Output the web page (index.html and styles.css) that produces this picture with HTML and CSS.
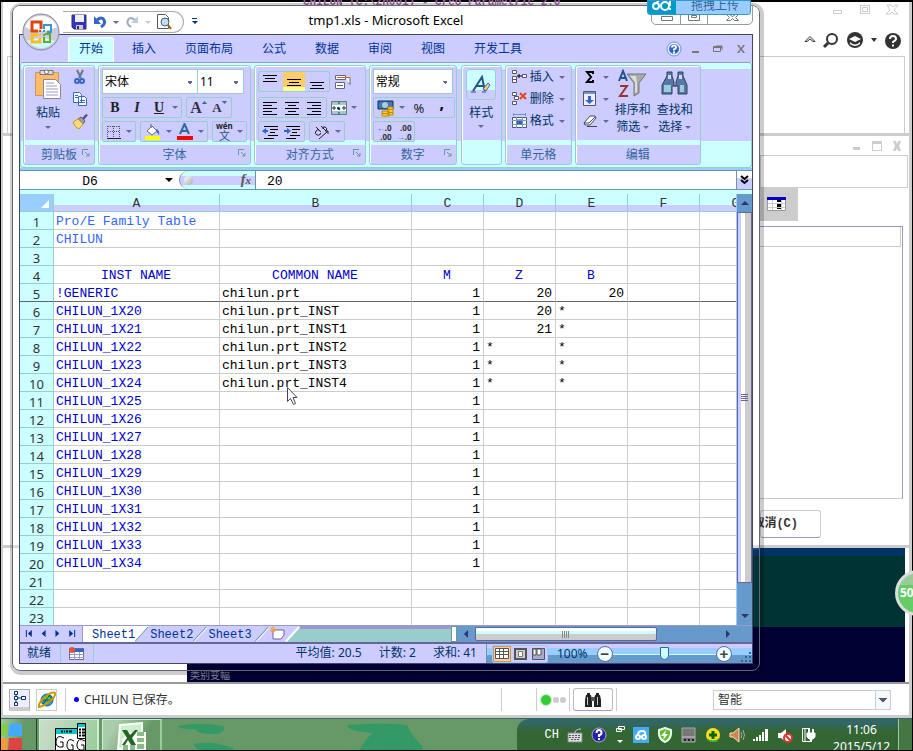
FILE: index.html
```html
<!DOCTYPE html>
<html lang="zh-CN">
<head>
<meta charset="utf-8">
<title>tmp1.xls - Microsoft Excel</title>
<link rel="stylesheet" href="styles.css">
</head>
<body>
<div class="desktop">
  <section class="cad">
    <header class="cad-head">
      <div class="cad-title">CHILUN (C:\Zh001) - Creo Parametric 2.0</div>
      <div class="cad-controls">
        <svg width="66" height="16" viewBox="0 0 66 16" fill="none" stroke="#ccc"><rect x=".5" y="8.500" width="8" height="3"/><rect x="27.500" y="3.500" width="9" height="8"/><rect x="29.500" y="5.500" width="5" height="4"/><path d="M54 3h4l2 2 2-2h3l-4 5 4 4h-4l-2-2-2 2h-4l4-4z"/></svg>
      </div>
      <div class="cad-tools">
        <svg width="98" height="20" viewBox="0 0 98 20"><path d="M1 10.500l5-5 5 5H9L6 8l-3 2.500z" fill="#fff" stroke="#333"/><circle cx="28" cy="8" r="5" fill="none" stroke="#333" stroke-width="2"/><path d="M24 12l-4 4" stroke="#333" stroke-width="3"/><circle cx="51" cy="9" r="8" fill="#333"/><path d="M45 8l6-3 6 3-6 3zM46 11q5 5 10 0v2q-5 4-10 0z" fill="#fff"/><path d="M67 7h6l-3 4z" fill="#333"/><circle cx="89" cy="10" r="8" fill="#333"/><path d="M86 8q0-3 3-3t3 3q0 1-3 3v1M89 13.500v2" stroke="#fff" stroke-width="2" fill="none"/></svg>
      </div>
      <div class="cad-ribbon"></div>
    </header>
    <div class="dialog">
      <div class="dialog-controls"><svg width="50" height="12" viewBox="0 0 50 12" fill="#ccc"><path d="M1 7h7v3H1zM20 1h10v10H20zM41 1h3l1 3 1-3h3l-2 5 2 5h-3l-1-3-1 3h-3l2-5z"/><path d="M21 4h8v6h-8z" fill="#fff"/></svg></div>
      <div class="dialog-menu"></div>
      <div class="dialog-tools"><svg width="20" height="16" viewBox="0 0 20 16"><path d="M.5 1.500h18v13H.5z" fill="#fff" stroke="#999"/><path d="M0 1h19v3H0z" fill="#00c"/><path d="M1 7.500h17M1 11.500h17M5.500 4v10M14.500 4v10" stroke="#ccc"/><path d="M10 4h4v2h-4zM10 8h4v3h-4zM10 12h4v1h-4z"/></svg></div>
      <div class="dialog-table"><div class="dialog-row"></div></div>
      <div class="dialog-actions"><button class="cancel">取消(C)</button></div>
    </div>
    <div class="viewport"><div class="view-top"></div><div class="view-low">类别变幅</div></div>
    <footer class="cad-status">
      <button class="sq on"><svg width="14" height="16" viewBox="0 0 14 16" fill="#fff" stroke="#036"><path d="M3 4v9M3 8h7" /><path d="M1.500 1.500h3v3h-3zM1.500 6.500h3v3h-3zM1.500 12.500h3v3h-3zM8.500 6.500h4v3h-4z"/></svg></button>
      <button class="sq"><svg width="18" height="18" viewBox="0 0 18 18"><circle cx="9" cy="9" r="6" fill="#39c" stroke="#069"/><path d="M4 9h10l-3-5-4 1zM5 13l6-8" fill="#6c6" stroke="#063"/><path d="M1 16Q0 12 7 6t10-4q1 3-5 8T1 16z" fill="none" stroke="#c90" stroke-width="2"/></svg></button>
      <i class="rule"></i>
      <span class="message"><i class="bullet"></i>CHILUN 已保存。</span>
      <i class="rule wide"></i><i class="rule"></i>
      <span class="lights"><i class="go"></i><i></i><i></i></span>
      <i class="rule"></i>
      <button class="find"><svg width="18" height="16" viewBox="0 0 18 16"><path d="M3 1h3v2h1l1 5v7H1V8l1-5h1zM12 1h3v2h1l1 5v7h-7V8l1-5h1z" fill="#222"/><path d="M7 5h4v4H7z" fill="#555"/><path d="M3.500 5v8M13.500 5v8" stroke="#ccc"/></svg></button>
      <i class="rule"></i>
      <select class="filter" aria-label="选择过滤器"><option>智能</option></select>
    </footer>
  </section>

  <main class="excel">
    <header class="titlebar">
      <div class="qat">
        <svg width="16" height="16" viewBox="0 0 16 16"><path d="M1 1h14v14H3l-2-2z" fill="#33c" stroke="#336"/><path d="M4 1h9v7H4z" fill="#eef"/><path d="M5 11h7v4H5z" fill="#ccd"/><path d="M6 12h2v3H6z" fill="#336"/></svg>
        <svg width="16" height="16" viewBox="0 0 16 16"><path d="M5 6q5-4 7 0t-3 7" fill="none" stroke="#36c" stroke-width="3"/><path d="M2 2v8h7z" fill="#36c"/></svg><i class="caret"></i>
        <svg width="16" height="16" viewBox="0 0 16 16"><path d="M11 6q-5-4-7 0t3 7" fill="none" stroke="#9ab" stroke-width="2"/><path d="M14 2v7H7z" fill="#bcd"/></svg><i class="caret pale"></i>
        <svg width="16" height="16" viewBox="0 0 16 16"><path d="M1.500.500h8l3 3v11h-11z" fill="#fff" stroke="#556"/><circle cx="9" cy="8" r="4" fill="#bdf" stroke="#556"/><path d="M12 11l3 4" stroke="#960" stroke-width="2"/></svg>
      </div>
      <i class="more"></i>
      <h1>tmp1.xls - Microsoft Excel</h1>
      <div class="win-controls"><svg width="100" height="18" viewBox="0 0 100 18" fill="#fff" stroke="#777"><path d="M28.500 0v18M55.500 0v18" stroke="#999"/><path d="M9.500 10.500h11v4h-11zM36.500 7.500h11v7h-11zM39.500 9.500h5v2h-5zM74.500 14.500l3-3-3-3h3l3 2 3-2h3l-3 3 3 3h-4l-2-2-2 2z"/></svg></div>
      <div class="upload"><svg width="28" height="14" viewBox="0 0 28 14" fill="none" stroke="#fff" stroke-width="2"><path d="M11 0L5 4"/><circle cx="8" cy="5" r="3"/><circle cx="17" cy="5" r="4"/><path d="M22 0v5M22 7v2"/></svg><span>拖拽上传</span></div>
    </header>
    <svg class="orb" width="38" height="38" viewBox="0 0 38 38"><circle cx="19" cy="19" r="18" fill="#ccd" stroke="#889"/><path d="M3 14a17 17 0 0 1 32 0q-16 8-32 0z" fill="#fff"/><path d="M5 28q14-6 28 0-14 14-28 0z" fill="#cff"/><g fill="none" stroke-width="2"><path d="M16 18h-6v-9h9v7" stroke="#d41" stroke-width="3"/><path d="M22 16v-4h7v7h-4" stroke="#39d"/><path d="M16 22h-6v7h8v-4" stroke="#fb2" stroke-width="3"/><path d="M23 21h5v8h-6v-5" stroke="#6a3"/></g><path d="M17 17h2v2h-2z" fill="#d41"/><path d="M21 17h2v2h-2z" fill="#39d"/><path d="M17 21h2v2h-2z" fill="#fb2"/><path d="M21 21h2v2h-2z" fill="#6a3"/></svg>

    <div class="client">
      <nav class="tabs">
        <a class="active" href="#">开始</a><a href="#">插入</a><a href="#">页面布局</a><a href="#">公式</a><a href="#">数据</a><a href="#">审阅</a><a href="#">视图</a><a href="#">开发工具</a>
        <svg class="doc-controls" width="82" height="16" viewBox="0 0 82 16"><circle cx="8" cy="8" r="6" fill="#36c" stroke="#eef" stroke-width="2"/><circle cx="8" cy="8" r="7" fill="none" stroke="#69c"/><path d="M6 6.500q0-2 2-2t2 2q0 1-2 2v1M8 10.500v2" stroke="#fff" fill="none" stroke-width="2"/><path d="M26 10h7v2h-7zM47 5h9v2h-9zM71 4h2l2 3 2-3h2l-3 4 3 4h-2l-2-3-2 3h-2l3-4z" fill="#777"/><path d="M47.500 6.500h7v4h-7zM50 5h6v4" fill="none" stroke="#777"/></svg>
      </nav>

      <div class="ribbon">
        <section class="group">
          <div class="body clip">
            <button class="big"><svg width="28" height="30" viewBox="0 0 28 30"><path d="M1.500 3.500h23v23h-23z" fill="#fb6" stroke="#c96"/><path d="M6 1.500h13v4H6z" fill="#ddd" stroke="#777"/><circle cx="12.500" cy="3" r="2" fill="#fff" stroke="#777"/><path d="M9.500 10.500h12l5 5v14h-17z" fill="#fff" stroke="#889"/><path d="M12 14h8M12 17h11M12 20h12M12 23h12M12 26h12" stroke="#99c"/></svg><span>粘贴</span><i class="caret"></i></button>
            <div class="stack">
              <button><svg width="16" height="16" viewBox="0 0 16 16" fill="none"><path d="M5 1l4 8M11 1L7 9" stroke="#678" stroke-width="2"/><circle cx="5" cy="12" r="2" stroke="#36c" stroke-width="2"/><circle cx="10" cy="12" r="2" stroke="#36c" stroke-width="2"/></svg></button>
              <button><svg width="16" height="16" viewBox="0 0 16 16" fill="#fff" stroke="#36c"><path d="M1.500 1.500h6l2 2v8h-8zM6.500 5.500h6l2 2v7h-8z"/><path d="M3 4.500h3M3 6.500h3M8 9.500h5M8 11.500h5"/></svg></button>
              <button><svg width="16" height="16" viewBox="0 0 16 16"><path d="M10 5l4-4 2 1-4 5z" fill="#558"/><path d="M6 6l3-2 4 4-2 3z" fill="#99a" stroke="#667"/><path d="M1 9l5-3 5 5-4 5q-4-1-6-7z" fill="#ffd97a" stroke="#b93"/></svg></button>
            </div>
          </div>
          <h2>剪贴板<svg class="launch" width="8" height="8" viewBox="0 0 8 8"><path d="M.5 6V.5H6M3 3l4 4M7 4v3H4" fill="none" stroke="#699"/></svg></h2>
        </section>

        <section class="group">
          <div class="body rows">
            <div class="line"><select class="box font" aria-label="字体"><option>宋体</option></select><select class="box size" aria-label="字号"><option>11</option></select></div>
            <div class="line">
              <div class="seg"><button class="b">B</button><button class="i">I</button><button class="u">U</button><i class="caret"></i></div>
              <div class="seg"><button class="grow">A<svg width="5" height="14" viewBox="0 0 5 14"><path d="M0 3l2.500-3L5 3z" fill="#369"/></svg></button><button class="shrink">A<svg width="5" height="14" viewBox="0 0 5 14"><path d="M0 0h5L2.500 3z" fill="#369"/></svg></button></div>
            </div>
            <div class="line full">
              <div class="seg"><button><svg width="16" height="14" viewBox="0 0 16 14" fill="none" stroke="#556"><path d="M1.500 1v12M7.500 1v12M13.500 1v12M2 1.500h12M2 6.500h12" stroke-dasharray="1 1"/><path d="M1 13.500h14" stroke="#223"/></svg></button><i class="caret"></i></div>
              <div class="seg"><button><svg width="18" height="18" viewBox="0 0 18 18"><path d="M3 8l5-5 5 5-5 4z" fill="#fff" stroke="#667"/><path d="M7 5V1" stroke="#667"/><path d="M12 6q4 1 3 6l-3-4z" fill="#36c"/><path d="M1 13h15v4H1z" fill="#ff0"/></svg></button><i class="caret"></i><button><svg width="18" height="18" viewBox="0 0 18 18"><path d="M4 11L8.500 1 13 11M6 8h6" fill="none" stroke="#369" stroke-width="2"/><path d="M1 13h16v4H1z" fill="red"/></svg></button><i class="caret"></i></div>
              <div class="seg"><button class="wen"><small>wén</small><span>文</span></button><i class="caret"></i></div>
            </div>
          </div>
          <h2>字体<svg class="launch" width="8" height="8" viewBox="0 0 8 8"><path d="M.5 6V.5H6M3 3l4 4M7 4v3H4" fill="none" stroke="#699"/></svg></h2>
        </section>

        <section class="group align">
          <div class="body rows">
            <div class="line"><div class="seg"><button class="al"><svg width="14" height="16" viewBox="0 0 14 16" stroke="#000"><path d="M0 1.500h14M2 4.500h10M0 7.500h14"/></svg></button><button class="al on"><svg width="14" height="16" viewBox="0 0 14 16" stroke="#000"><path d="M0 5.500h14M2 8.500h10M0 11.500h14"/></svg></button><button class="al"><svg width="14" height="16" viewBox="0 0 14 16" stroke="#000"><path d="M0 8.500h14M2 11.500h10M0 14.500h14"/></svg></button></div>
              <button><svg width="18" height="18" viewBox="0 0 18 18" fill="#fff" stroke="#667"><path d="M1.500 2.500h10v4h-10zM1.500 9.500h9v6h-9z"/><path d="M3 12.500h6M12 4.500h4v7l-2-2" stroke="#666"/><path d="M3 4.500h13" stroke="#c63"/></svg></button></div>
            <div class="line"><div class="seg"><button class="al"><svg width="14" height="14" viewBox="0 0 14 14" stroke="#000"><path d="M0 1.500h14M0 4.500h9M0 7.500h14M0 10.500h9M0 13.500h14"/></svg></button><button class="al"><svg width="14" height="14" viewBox="0 0 14 14" stroke="#000"><path d="M0 1.500h14M3 4.500h8M0 7.500h14M3 10.500h8M0 13.500h14"/></svg></button><button class="al"><svg width="14" height="14" viewBox="0 0 14 14" stroke="#000"><path d="M0 1.500h14M5 4.500h9M0 7.500h14M5 10.500h9M0 13.500h14"/></svg></button></div>
              <button><svg width="16" height="14" viewBox="0 0 16 14"><path d="M.5.500h15v13H.5z" fill="#9cc" stroke="#677"/><path d="M1 4h14v6H1z" fill="#fff"/><path d="M1 7h4M3 5v4M11 7h4M13 5v4M8 1v2M8 11v2" stroke="#333"/><path d="M6 8q0-3 2-2t1 3q-2 0-3-1z" fill="#036"/></svg></button><i class="caret"></i></div>
            <div class="line"><div class="seg"><button class="al"><svg width="16" height="14" viewBox="0 0 16 14" stroke="#000"><path d="M2 1.500h14M8 4.500h8M8 7.500h5M6 10.500h10M2 13.500h10"/><path d="M6 6H1" stroke="#36c" stroke-width="2"/><path d="M4 3L0 6l4 3z" fill="#36c" stroke="none"/></svg></button><button class="al"><svg width="16" height="14" viewBox="0 0 16 14" stroke="#000"><path d="M2 1.500h14M8 4.500h8M8 7.500h5M6 10.500h10M2 13.500h10"/><path d="M0 6h4" stroke="#36c" stroke-width="2"/><path d="M3 3l4 3-4 3z" fill="#36c" stroke="none"/></svg></button></div>
              <div class="seg"><button><svg width="18" height="16" viewBox="0 0 18 16" fill="none" stroke="#222"><path d="M3 3l5 5M7 7q-2-3-4 0t1 4 4-2M8 2l5 5q2-3-1-4t-2 2M6 15l9-8M15 10V7h-3"/></svg></button><i class="caret"></i></div></div>
          </div>
          <h2>对齐方式<svg class="launch" width="8" height="8" viewBox="0 0 8 8"><path d="M.5 6V.5H6M3 3l4 4M7 4v3H4" fill="none" stroke="#699"/></svg></h2>
        </section>

        <section class="group number">
          <div class="body rows">
            <div class="line"><select class="box num" aria-label="数字格式"><option>常规</option></select></div>
            <div class="line"><div class="seg"><button><svg width="18" height="18" viewBox="0 0 18 18"><path d="M1 2h15v8H1z" fill="#47a" stroke="#036"/><circle cx="8" cy="6" r="3" fill="#acd"/><path d="M11 8h5v8h-5zM5 12h7v5H5z" fill="#fc3" stroke="#b80"/><path d="M11 10.500h5M11 13.500h5M5 14.500h6" stroke="#b80"/></svg></button><i class="caret"></i><button class="pct">%</button><button class="comma">,</button></div></div>
            <div class="line"><div class="seg dec"><button><span><b>←</b>.0</span><span>.00</span></button><button><span>.00</span><span><b>→</b>.0</span></button></div></div>
          </div>
          <h2>数字<svg class="launch" width="8" height="8" viewBox="0 0 8 8"><path d="M.5 6V.5H6M3 3l4 4M7 4v3H4" fill="none" stroke="#699"/></svg></h2>
        </section>

        <section class="group styles">
          <button class="big"><span class="tile"><svg width="22" height="20" viewBox="0 0 22 20"><path d="M3 16L12 2l3 14M7 11h7" fill="none" stroke="#258" stroke-width="2"/><path d="M1 17h5M12 17h4" stroke="#258"/><path d="M13 14l5-6 2 2-4 6z" fill="#fc6" stroke="#36c"/></svg></span><span>样式</span><i class="caret"></i></button>
        </section>

        <section class="group">
          <div class="body cells">
            <button><svg width="18" height="16" viewBox="0 0 18 16" fill="#fff" stroke="#556"><path d="M1.500 1.500h4v3h-4zM1.500 7.500h4v3h-4zM1.500 10.500h4v3h-4zM11.500 5.500h4v3h-4z"/><path d="M6 7h5M8 5v4" stroke="#000"/></svg>插入<i class="caret"></i></button>
            <button><svg width="18" height="16" viewBox="0 0 18 16" fill="#fff" stroke="#556"><path d="M1.500 1.500h4v3h-4zM1.500 10.500h4v3h-4zM3.500 5.500h4v3h-4z"/><path d="M9 2l6 6M15 2L9 8" stroke="#e42" stroke-width="2"/></svg>删除<i class="caret"></i></button>
            <button><svg width="18" height="16" viewBox="0 0 18 16" fill="#fff" stroke="#556"><path d="M1.500 4.500h14v10h-14z"/><path d="M6 7h5v4H6z" fill="#36c"/><path d="M1 7.500h15M1 11.500h15M5.500 4v11M11.500 4v11M2 1.500h13M2.500 0v3M14.500 0v3" stroke="#69c"/></svg>格式<i class="caret"></i></button>
          </div>
          <h2>单元格</h2>
        </section>

        <section class="group">
          <div class="body edit">
            <div class="stack">
              <button><svg width="14" height="16" viewBox="0 0 14 16"><path d="M10 5V3H4l4 5-4 5h6v-2" fill="none" stroke="#000" stroke-width="2"/></svg><i class="caret"></i></button>
              <button><svg width="14" height="16" viewBox="0 0 14 16"><path d="M.5.500h12v14H.5z" fill="#eef" stroke="#556"/><path d="M1 1h11v2H1z" fill="#69c"/><path d="M5 5h3v4h3l-4.500 4L2 9h3z" fill="#36c"/></svg><i class="caret"></i></button>
              <button><svg width="14" height="16" viewBox="0 0 14 16"><path d="M1 10l6-7h5l1 2-6 7H2z" fill="#fff" stroke="#445"/><path d="M1 10h5l6-6M4 13.500h10" fill="none" stroke="#445"/></svg><i class="caret"></i></button>
            </div>
            <button class="big"><svg width="32" height="30" viewBox="0 0 32 30"><path d="M2 12L6 2l4 10M4 9h5" fill="none" stroke="#258" stroke-width="2"/><path d="M3 17h7L3 27h8" fill="none" stroke="#933" stroke-width="2"/><path d="M10 5h19l-7 9v10l-5 3V14z" fill="#aaa" stroke="#777"/><path d="M13 7h6l1 7v9l-2 1V13z" fill="#ddd"/></svg><span>排序和<br>筛选 <i class="caret"></i></span></button>
            <button class="big"><svg width="30" height="30" viewBox="0 0 30 30"><path d="M7 3h5v4l2 6v4h2v-4l2-6V3h5v4l4 9v9h-9v-8h-6v8H2v-9l5-9z" fill="#57a" stroke="#345"/><path d="M4 16h7v7H4zM20 16h4v7h-4z" fill="#9cd"/><path d="M8 6h3v4H8zM19 6h3v4h-3z" fill="#cde"/></svg><span>查找和<br>选择 <i class="caret"></i></span></button>
          </div>
          <h2>编辑</h2>
        </section>
      </div>

      <div class="formula">
        <input class="name" value="D6" aria-label="名称框"><i class="down"></i>
        <button class="fx"><i class="knob"></i><em>f<small>x</small></em></button>
        <input class="value" value="20" aria-label="编辑栏">
        <button class="expand"><svg width="9" height="10" viewBox="0 0 9 10" fill="none" stroke="#000" stroke-width="2"><path d="M1 1l3.500 3L8 1M1 5l3.500 3L8 5"/></svg></button>
      </div>

      <div class="work">
        <div class="sheet">
          <table>
            <colgroup><col class="c0"><col class="ca"><col class="cb"><col><col><col><col><col></colgroup>
            <thead><tr><th class="corner"><svg width="8" height="8" viewBox="0 0 8 8"><path d="M8 0v8H0z" fill="#fff"/></svg></th><th>A</th><th>B</th><th>C</th><th>D</th><th>E</th><th>F</th><th>G</th></tr></thead>
            <tbody>
              <tr><th>1</th><td class="title">Pro/E Family Table</td><td></td><td></td><td></td><td></td><td></td><td></td></tr>
              <tr><th>2</th><td class="title">CHILUN</td><td></td><td></td><td></td><td></td><td></td><td></td></tr>
              <tr><th>3</th><td></td><td></td><td></td><td></td><td></td><td></td><td></td></tr>
              <tr class="names"><th>4</th><td>INST NAME</td><td>COMMON NAME</td><td>M</td><td>Z</td><td>B</td><td></td><td></td></tr>
              <tr class="frozen"><th>5</th><td>!GENERIC</td><td>chilun.prt</td><td class="n">1</td><td class="n">20</td><td class="n">20</td><td></td><td></td></tr>
              <tr><th>6</th><td>CHILUN_1X20</td><td>chilun.prt_INST</td><td class="n">1</td><td class="n">20</td><td>*</td><td></td><td></td></tr>
              <tr><th>7</th><td>CHILUN_1X21</td><td>chilun.prt_INST1</td><td class="n">1</td><td class="n">21</td><td>*</td><td></td><td></td></tr>
              <tr><th>8</th><td>CHILUN_1X22</td><td>chilun.prt_INST2</td><td class="n">1</td><td>*</td><td>*</td><td></td><td></td></tr>
              <tr><th>9</th><td>CHILUN_1X23</td><td>chilun.prt_INST3</td><td class="n">1</td><td>*</td><td>*</td><td></td><td></td></tr>
              <tr><th>10</th><td>CHILUN_1X24</td><td>chilun.prt_INST4</td><td class="n">1</td><td>*</td><td>*</td><td></td><td></td></tr>
              <tr><th>11</th><td>CHILUN_1X25</td><td></td><td class="n">1</td><td></td><td></td><td></td><td></td></tr>
              <tr><th>12</th><td>CHILUN_1X26</td><td></td><td class="n">1</td><td></td><td></td><td></td><td></td></tr>
              <tr><th>13</th><td>CHILUN_1X27</td><td></td><td class="n">1</td><td></td><td></td><td></td><td></td></tr>
              <tr><th>14</th><td>CHILUN_1X28</td><td></td><td class="n">1</td><td></td><td></td><td></td><td></td></tr>
              <tr><th>15</th><td>CHILUN_1X29</td><td></td><td class="n">1</td><td></td><td></td><td></td><td></td></tr>
              <tr><th>16</th><td>CHILUN_1X30</td><td></td><td class="n">1</td><td></td><td></td><td></td><td></td></tr>
              <tr><th>17</th><td>CHILUN_1X31</td><td></td><td class="n">1</td><td></td><td></td><td></td><td></td></tr>
              <tr><th>18</th><td>CHILUN_1X32</td><td></td><td class="n">1</td><td></td><td></td><td></td><td></td></tr>
              <tr><th>19</th><td>CHILUN_1X33</td><td></td><td class="n">1</td><td></td><td></td><td></td><td></td></tr>
              <tr><th>20</th><td>CHILUN_1X34</td><td></td><td class="n">1</td><td></td><td></td><td></td><td></td></tr>
              <tr><th>21</th><td></td><td></td><td></td><td></td><td></td><td></td><td></td></tr>
              <tr><th>22</th><td></td><td></td><td></td><td></td><td></td><td></td><td></td></tr>
              <tr><th>23</th><td></td><td></td><td></td><td></td><td></td><td></td><td></td></tr>
            </tbody>
          </table>
        </div>
        <div class="vbar"><i class="up"></i><div class="vthumb"><i></i></div><i class="dn"></i></div>
      </div>

      <div class="sheetbar">
        <svg class="nav" width="63" height="16" viewBox="0 0 63 16" fill="#039"><path d="M6 4h1v7H6zM12 4v7L8 7.500zM26 4v7l-4-3.500zM36 4v7l4-3.500zM50 4v7l4-3.500zM55 4h1v7h-1z"/></svg>
        <a class="first" href="#">Sheet1</a>
        <svg width="15" height="16" viewBox="0 0 15 16"><path d="M0 0h14L0 15z" fill="#fff"/><path d="M0 15.500L13 1" stroke="#699"/></svg>
        <a href="#">Sheet2</a>
        <svg width="15" height="16" viewBox="0 0 15 16"><path d="M0 15.500L13 1" stroke="#699"/><path d="M1 16L14 2" stroke="#fff"/></svg>
        <a href="#">Sheet3</a>
        <svg width="18" height="16" viewBox="0 0 18 16"><path d="M3 15.500L16 1" stroke="#699"/><path d="M4 16L17 2" stroke="#fff"/></svg>
        <svg width="30" height="16" viewBox="0 0 30 16"><path d="M30 0v16H16L30 1z" fill="#9cc"/><path d="M16 15.500L29 1" stroke="#fff" stroke-width="2"/><path d="M3 4h11v5l-3 4H3z" fill="#fff" stroke="#669"/><path d="M3 0v7M0 4h7M1 2l4 4M5 2L1 6" stroke="#f93"/></svg>
        <div class="gap"></div><i class="split"></i>
        <div class="hbar"><i class="lt"></i><div class="hthumb"><i></i></div><i class="rt"></i></div>
      </div>

      <footer class="status">
        <span class="ready">就绪</span>
        <span class="macro"><svg width="16" height="14" viewBox="0 0 16 14"><path d="M.5 1.500h14v11H.5z" fill="#fff" stroke="#669"/><path d="M1 2h14v3H1z" fill="#36c"/><path d="M1 7.500h14M1 10.500h14M5.500 5v8M10.500 5v8" stroke="#99c"/><circle cx="3" cy="3" r="3" fill="#d53"/></svg></span>
        <span class="stats"><span>平均值: 20.5</span><span>计数: 2</span><span>求和: 41</span></span>
        <div class="zoom">
          <div class="views">
            <button class="on"><svg width="14" height="11" viewBox="0 0 14 11"><path d="M.5.500h13v10H.5zM1 3.500h13M1 6.500h13M4.500 1v9M8.500 1v9" fill="#fff" stroke="#555"/></svg></button>
            <button><svg width="13" height="12" viewBox="0 0 13 12"><path d="M1 1h11v10H1z" fill="#ccc" stroke="#555" stroke-width="2"/><path d="M4.500 3.500h4v5h-4z" fill="#fff" stroke="#777"/></svg></button>
            <button><svg width="13" height="12" viewBox="0 0 13 12"><path d="M.5.500h12v11H.5z" fill="#aac" stroke="#555"/><path d="M1 1h3v6H1zM5 1h4v6H5z" fill="#fff" stroke="#555"/></svg></button>
          </div>
          <span class="percent">100%</span>
          <button class="round">−</button>
          <input type="range" min="0" max="100" value="50" aria-label="缩放">
          <button class="round">+</button>
          <svg class="grip" width="12" height="12" viewBox="0 0 12 12" fill="#369"><path d="M9 1h2v2H9zM5 5h2v2H5zM9 5h2v2H9zM1 9h2v2H1zM5 9h2v2H5zM9 9h2v2H9z"/></svg>
        </div>
      </footer>
    </div>
  </main>

  <div class="counter">50</div>
  <svg class="pointer" width="14" height="20" viewBox="0 0 14 20"><path d="M1.500 1.500v14l3-3 3 6 2-1-2.500-6h4z" fill="#fff" stroke="#446"/></svg>

  <footer class="taskbar">
    <button class="start"><svg width="22" height="30" viewBox="0 0 22 30"><path d="M0 4h6v12H0z" fill="#8c4"/><path d="M8 5q8-4 13 0v11H7z" fill="#4af"/><path d="M0 18h6v12H0z" fill="#f93"/><path d="M8 18h13v12H7z" fill="#d44"/></svg></button>
    <button class="task"><svg width="34" height="28" viewBox="0 0 34 28"><path d="M3.500 6.500h30v22h-30z" fill="#fff" stroke="#000"/><path d="M4 7h21v5H4z" fill="#0cc"/><path d="M25.500 1.500h8v15h-8z" fill="#fff" stroke="#000"/><path d="M26 2h7v3h-7z" fill="#0cc"/><path d="M27 7.500h2M30 7.500h3M27 10.500h2M30 10.500h3M27 13.500h2M30 13.500h3M9 9.500h2M12 9.500h1M14 9.500h2M17 9.500h3" stroke="#000" stroke-width="2"/><path d="M12 16q-7-4-8 3t7 6v-5h-3M22 19q-6-4-7 3t6 6v-5h-2M33 19q-7-4-8 3t7 6v-5h-3" fill="none" stroke="#000"/></svg></button>
    <button class="task xl"><svg width="30" height="28" viewBox="0 0 30 28"><path d="M3 3l22-2v20L1 28z" fill="#cec" stroke="#fff" stroke-width="2"/><path d="M12 10h17v18H5V18z" fill="#fff"/><path d="M5 8h5l3 5 5-5h3l-6 8 4 7h-5l-3-5-3 5H5l5-7z" fill="#262"/><path d="M20 10h7v4h-7zM20 16h7v4h-7zM20 22h7v5h-7zM13 23h5v5h-5zM6 23h5v5H6z" fill="#8b8"/></svg></button>
    <svg class="wallpaper" width="260" height="32" viewBox="0 0 260 32" fill="#396"><path d="M14 7q22-4 46 0 4 5-6 8-24 0-20-5-14 1-20-3zM30 25q20-4 40 4v3H36zM184 6q34-3 60 0 4 10 16 22v4h-64q6-12 14-18-26-2-26-8z"/></svg>
    <div class="tray">
      <span class="lang">CH</span>
      <svg width="16" height="16" viewBox="0 0 16 16"><path d="M1 6h14v9H1z" fill="#ddd" stroke="#888"/><path d="M2 8.500h12M2 10.500h12M4 12.500h8" stroke="#555" stroke-dasharray="2 1"/><path d="M8 6q0-4 6-4" fill="none" stroke="#ccc"/></svg>
      <svg width="16" height="16" viewBox="0 0 16 16"><circle cx="8" cy="8" r="7" fill="#22a" stroke="#aac"/><path d="M5.500 6q0-3 2.500-3t2.500 2.500T8 8v2M8 11v2" fill="none" stroke="#fff" stroke-width="2"/></svg>
      <svg width="10" height="20" viewBox="0 0 10 20"><path d="M3.500 1.500h6v3h-6zM1.500 3.500h5v3h-5z" fill="#363" stroke="#fff"/><path d="M2 15h6l-3 3z" fill="#fff"/></svg>
      <svg width="16" height="16" viewBox="0 0 16 16"><path d="M0 0h16v16H0z" fill="#4af"/><path d="M5 8q0-4 4-4t3 4" fill="none" stroke="#fff" stroke-width="2"/><circle cx="5" cy="10" r="2" fill="none" stroke="#fff" stroke-width="2"/><circle cx="11" cy="10" r="2" fill="none" stroke="#fff" stroke-width="2"/></svg>
      <svg width="16" height="16" viewBox="0 0 16 16"><path d="M8 1l6 2q1 9-6 12Q1 12 2 3z" fill="#6b3" stroke="#efe" stroke-width="2"/><path d="M9 3L4 9h3l-1 4 5-6H8z" fill="#fff"/></svg>
      <svg width="16" height="16" viewBox="0 0 16 16"><path d="M1 1h13v14H1z" fill="#777" stroke="#aaa"/><path d="M1 10h13" stroke="#ccc"/><path d="M3 12h2v2H3zM7 12h2v2H7zM11 12h2v2h-2z" fill="#222"/></svg>
      <svg width="16" height="16" viewBox="0 0 16 16"><circle cx="8" cy="8" r="7" fill="#fd2"/><path d="M2 11q6 5 12 0l-2 4H5z" fill="#3a3"/><path d="M8 4v8M4 8h8" stroke="#060" stroke-width="3"/></svg>
      <svg width="16" height="16" viewBox="0 0 16 16"><path d="M1 6h3l6-5v14l-6-5H1z" fill="#c85" stroke="#fdb"/><path d="M12 5q2 3 0 6M14 3q3 5 0 10" fill="none" stroke="#aaa"/></svg>
      <svg width="16" height="16" viewBox="0 0 16 16" fill="#fff"><path d="M0 12h2v2H0zM3 10h2v4H3zM6 8h2v6H6zM9 5h2v9H9zM12 2h3v12h-3z"/></svg>
      <svg width="16" height="16" viewBox="0 0 16 16"><path d="M1 6h3l5-4v13l-5-4H1z" fill="#fff"/><circle cx="11" cy="11" r="4" fill="#fff" stroke="#d33" stroke-width="2"/><path d="M8 8l6 6" stroke="#d33" stroke-width="2"/></svg>
      <svg width="16" height="16" viewBox="0 0 16 16" fill="none" stroke="#fff"><path d="M9 1.500H1.500v13H9M4 1v13" /><path d="M6 6h8v4l-2 2H8l-2-2z" fill="#fff"/><path d="M8 2v4M12 2v4M10 12v3" stroke-width="2"/></svg>
      <time><span>11:06</span><span>2015/5/12</span></time>
      <button class="show" aria-label="显示桌面"></button>
    </div>
  </footer>
</div>
</body>
</html>
```
FILE: styles.css
```css
* { box-sizing: border-box; }
body {
  margin: 0;
  background: #000;
  font: 12px/16px "Noto Sans", "Noto Sans CJK SC", sans-serif;
  color: #036;
}
button { border: 0; padding: 0; margin: 0; background: none; color: inherit; font: inherit; display: flex; align-items: center; justify-content: center; }
svg { display: block; flex: none; }
a { color: inherit; text-decoration: none; }
h1, h2 { margin: 0; font-weight: normal; font-size: 12px; }
i { font-style: normal; flex: none; }
select { appearance: none; border-radius: 0; font: inherit; }

.desktop { position: relative; height: 100vh; overflow: hidden; display: flex; flex-direction: column; padding: 2px 1px 1px; }

/* CAD program behind the spreadsheet */
.cad { flex: 1; display: flex; flex-direction: column; background: #fff; border: solid #ccc; border-width: 0 3px 3px 2px; min-height: 0; }
.cad-head { height: 134px; border-bottom: 3px solid #ccc; display: flex; flex-direction: column; align-items: flex-end; position: relative; }
.cad-title { position: absolute; top: -8px; left: 300px; font: bold 11px/16px "Liberation Mono", monospace; color: #969; }
.cad-controls { padding: 0 10px; }
.cad-tools { padding: 13px 7px 4px; }
.cad-ribbon { flex: 1; align-self: stretch; border: 1px solid #ccc; border-bottom: 0; margin: 1px 4px 0 4px; }
.dialog { height: 412px; display: flex; flex-direction: column; border-bottom: 3px solid #ccc; padding-left: 757px; }
.dialog-controls { display: flex; justify-content: flex-end; padding: 4px 7px 3px; }
.dialog-menu { height: 33px; border: 1px solid #ccc; margin-right: 1px; }
.dialog-tools { width: 38px; height: 33px; background: #ccc; padding: 8px 7px; }
.dialog-table { height: 273px; margin: 5px 6px 0 0; border: 1px solid #99c; border-width: 1px 1px 1px 0; border-bottom-color: #ccc; }
.dialog-row { height: 20px; border-bottom: 1px solid #ccc; border-right: 1px solid #ccc; margin-right: 1px; }
.dialog-actions { padding: 11px 0 0; }
.cancel { width: 61px; height: 28px; border: 1px solid #ccc; border-bottom-color: #99c; border-radius: 3px; justify-content: flex-end; padding-right: 22px; color: #333; font: bold 12px/16px "Liberation Mono", "Noto Sans CJK SC", monospace; white-space: nowrap; }
.viewport { flex: 1; margin: 0 4px 0 184px; display: flex; flex-direction: column; background: #003; min-height: 0; }
.view-top { height: 79px; background: #033; border-top: 8px solid #036; }
.view-low { flex: 1; display: flex; align-items: flex-end; padding-left: 3px; font-size: 10px; line-height: 14px; color: #889; }
.cad-status { height: 33px; border-top: 2px solid #999; display: flex; align-items: center; gap: 6px; padding: 0 18px 0 6px; color: #333; }
.sq { width: 21px; height: 22px; border: 1px solid #ccc; }
.sq.on { background: #eef; border-color: #aaa; border-bottom: 4px solid #ccc; }
.rule { width: 1px; height: 23px; background: #ccc; margin: 0 2px; }
.message { display: flex; align-items: center; gap: 5px; flex: 1; }
.bullet { width: 5px; height: 5px; border-radius: 3px; background: #00f; }
.rule.wide { margin-right: 26px; }
.lights { display: flex; align-items: center; gap: 1px; margin: 0 -5px; }
.lights i { width: 6px; height: 6px; border-radius: 3px; background: #ccc; }
.lights .go { width: 12px; height: 12px; border-radius: 6px; background: #3c3; border: 1px solid #cec; }
.find { width: 40px; height: 23px; border: 1px solid #bbb; border-bottom-color: #99c; border-radius: 3px; margin: 0 -5px; }
.filter { width: 178px; height: 20px; margin-left: 88px; border: 1px solid #ccc; padding: 0 4px; color: #333; background: linear-gradient(45deg, transparent 50%, #556 50%) calc(100% - 7px) 7px / 4px 5px no-repeat, linear-gradient(-45deg, transparent 50%, #556 50%) calc(100% - 3px) 7px / 4px 5px no-repeat, linear-gradient(90deg, #ccc 1px, #f4f8ff 1px) 100% 0 / 15px 100% no-repeat, #fff; }

/* Spreadsheet window */
.excel { position: absolute; left: 12px; right: 153px; top: 5px; bottom: 80px; border: 1px solid #667; border-radius: 8px; box-shadow: 1px 1px 0 3px rgba(0, 0, 0, .2); display: flex; flex-direction: column; background: linear-gradient(#fff 0 80%, transparent 82%); }
.titlebar { height: 28px; display: flex; align-items: center; justify-content: center; position: relative; background: #fff; border-radius: 7px 7px 0 0; color: #000; }
.titlebar h1 { font-size: 13px; }
.qat { position: absolute; left: 50px; top: 5px; height: 22px; width: 121px; border: 1px solid #aaa; border-left: 0; border-radius: 0 11px 11px 0; display: flex; align-items: center; gap: 5px; padding-left: 8px; }
.more { position: absolute; left: 179px; top: 12px; width: 5px; height: 6px; border-top: 1px solid #036; }
.more::after { content: ""; position: absolute; top: 2px; left: 0; border: solid transparent; border-width: 3px 3px 0; border-top-color: #036; }
.win-controls { position: absolute; right: 6px; top: -1px; border: 1px solid #999; border-radius: 0 0 5px 5px; overflow: hidden; }
.upload { position: absolute; right: 8px; top: -6px; display: flex; border: 1px solid #39c; border-radius: 0 0 3px 3px; background: #9cf; color: #369; overflow: hidden; height: 15px; width: 104px; }
.upload svg { background: #09c; }
.upload span { padding-left: 15px; line-height: 9px; }
.orb { position: absolute; left: 9px; top: 7px; z-index: 1; }
.client { flex: 1; min-height: 0; margin: 0 6px 6px; border: 1px solid #446; display: flex; flex-direction: column; background: #cff; }
.caret { display: inline-block; border: solid transparent; border-width: 3px 3px 0; border-top-color: #669; vertical-align: middle; }
.caret.pale { border-top-color: #ccc; }

.tabs { height: 27px; background: #ccf; display: flex; align-items: flex-end; padding-left: 48px; color: #039; }
.tabs a { padding: 3px 11px 5px; margin-right: 7px; }
.tabs a.active { background: #cff; border: 1px solid #fff; border-bottom: 0; border-radius: 3px 3px 0 0; padding: 3px 10px 5px; }
.doc-controls { margin: 0 4px 5px auto; }

.ribbon { height: 106px; border: 1px solid #9cc; border-top-color: #99c; border-radius: 3px; background: linear-gradient(#cff 6px, #ccf 6px 78px, #cff 78px); display: flex; gap: 3px; padding: 2px; }
.group { height: 100px; display: flex; flex-direction: column; border: 1px solid #9cc; box-shadow: inset 1px 1px #fff; border-radius: 3px; background: linear-gradient(#ccf 74px, #cff 74px 79px, #ccf 79px); }
.group h2 { height: 19px; line-height: 19px; text-align: center; color: #369; position: relative; }
.launch { position: absolute; right: 4px; top: 4px; }
.body { height: 79px; padding: 3px; display: flex; }
.big { flex-direction: column; justify-content: flex-start; line-height: 17px; white-space: nowrap; }
.clip { gap: 10px; padding: 3px 6px 3px 10px; }
.clip .big { gap: 5px; }
.stack { display: flex; flex-direction: column; gap: 6px; }
.rows { display: grid; grid-template-rows: 25px 21px 21px; gap: 3px; }
.line { display: flex; align-items: center; gap: 4px; }
.line.full { justify-content: space-between; }
.box { height: 25px; border: 1px solid #9cc; padding: 0 2px; color: #000; background: linear-gradient(45deg, transparent 50%, #669 50%) calc(100% - 7px) 11px / 3px 3px no-repeat, linear-gradient(-45deg, transparent 50%, #669 50%) calc(100% - 4px) 11px / 3px 3px no-repeat, #fff; }
.font { width: 96px; margin-right: -5px; }
.size { width: 47px; }
.num { width: 80px; }
.seg { height: 21px; border: 1px solid #9cc; border-radius: 2px; display: flex; align-items: center; gap: 4px; padding: 0 3px; background: #ccf; }
.seg .b, .seg .i, .seg .u { width: 18px; font: bold 14px/16px "Liberation Serif", serif; color: #222; }
.seg .i { font-style: italic; }
.seg .u { text-decoration: underline; }
.grow, .shrink { width: 17px; font: bold 16px/16px "Liberation Serif", serif; color: #334; }
.shrink { font-size: 13px; }
.wen { flex-direction: column; color: #258; }
.wen small { font: bold 8px/8px "Noto Sans", sans-serif; color: #222; }
.wen span { font-size: 11px; line-height: 11px; }
.al { width: 19px; height: 19px; }
.al.on { width: 22px; background: linear-gradient(#fc6 80%, #ff9 80%); }
.rows .seg:has(.al) { padding: 0 2px; gap: 3px; }
.align { width: 112px; }
.number { width: 88px; }
.pct { width: 20px; color: #222; font-size: 13px; }
.comma { width: 18px; height: 19px; color: #000; font: bold 16px/10px "Noto Sans", sans-serif; align-items: flex-start; }
.dec { gap: 5px; }
.dec button { flex-direction: column; align-items: flex-end; font: bold 8px/9px "Noto Sans", sans-serif; color: #333; }
.dec b { color: #36c; }
.styles { width: 41px; background: linear-gradient(#ccf 74px, #cff 74px); padding-top: 3px; margin-left: 1px; align-items: center; }
.tile { width: 30px; height: 31px; border: 1px solid #9cc; border-radius: 3px; display: grid; place-items: center; background: linear-gradient(#cff 70%, #ccf 70%); }
.styles .big { gap: 4px; }
.cells { flex-direction: column; gap: 6px; width: 65px; padding: 3px 5px; }
.cells button { gap: 1px; justify-content: flex-start; height: 16px; white-space: nowrap; }
.cells .caret { margin-left: 4px; }
.edit { gap: 6px; padding: 3px 7px; }
.edit .stack button { gap: 6px; }
.edit .big { gap: 2px; }

.formula { height: 26px; flex: none; border-top: 2px solid #9cf; border-bottom: 4px solid #cff; background: #fff; display: flex; align-items: stretch; box-shadow: inset 0 1px #699, inset 0 -1px #699; padding: 1px 0; }
.formula input { border: 0; background: none; padding: 3px 0 0; min-width: 0; font: 13px/15px "Liberation Mono", monospace; color: #000; }
.name { width: 140px; text-align: center; }
.down { align-self: center; border: solid transparent; border-width: 4px 4px 0; border-top-color: #000; margin: 0 6px 0 5px; }
.fx { width: 77px; border: 1px solid #699; border-width: 0 1px 0 1px; border-radius: 9px 0 0 9px; background: linear-gradient(#cff 30%, #ccf 30% 80%, #cff 80%); justify-content: space-between; padding: 0 4px; }
.knob { width: 9px; height: 9px; border-radius: 5px; background: linear-gradient(135deg, #fff, #aaa); }
.fx em { font: italic bold 14px/16px "Liberation Serif", serif; color: #555; }
.fx small { font-size: 11px; }
.formula .value { flex: 1; padding-left: 11px; }
.expand { width: 16px; background: linear-gradient(#fff 40%, #ccf 40%); border-left: 1px solid #699; }

.work { flex: 1; min-height: 0; display: flex; background: #fff; }
.sheet { flex: 1; min-width: 0; overflow: hidden; }
.sheet table { table-layout: fixed; width: 752px; border-collapse: separate; border-spacing: 0; font: 13px/14px "Liberation Mono", monospace; color: #00c; }
.sheet col { width: 72px; }
.sheet col.c0 { width: 34px; }
.sheet col.ca { width: 166px; }
.sheet col.cb { width: 192px; }
.sheet th, .sheet td { height: 18px; padding: 3px 3px 0 2px; border: solid #ccc; border-width: 0 1px 1px 0; white-space: nowrap; text-align: left; }
.sheet th { background: #cff; border-color: #9cc; text-align: center; font: 13px/14px "Noto Sans", sans-serif; color: #333; padding: 3px 0 0; }
.sheet thead th { font: 13px/14px "Liberation Mono", monospace; background: linear-gradient(#cff 11px, #ccf 11px); }
.sheet .corner { background: #9cf; }
.corner svg { margin: 0 4px 0 auto; }
.sheet .title { color: #36f; }
.sheet .names td { text-align: center; }
.sheet tr:not(.names) td:nth-child(n+3), .sheet .n { color: #000; }
.sheet td.n { text-align: right; }
.sheet .frozen td, .sheet .frozen th { border-bottom-color: #666; }

.vbar { width: 16px; background: #69c; border-left: 1px solid #9cf; display: flex; flex-direction: column; align-items: center; }
.up, .dn, .lt, .rt { border: 4px solid transparent; }
.up { border-top: 0; border-bottom-color: #336; margin: 7px 0; }
.dn { border-bottom: 0; border-top-color: #336; margin: 31px 0 7px; }
.vthumb { flex: 1; align-self: stretch; border: 1px solid #669; background: linear-gradient(90deg, #ccf 3px, #fff 3px 7px, #ccc 7px); display: grid; place-items: center; }
.vthumb i { width: 7px; height: 7px; background: repeating-linear-gradient(#669 0 1px, transparent 1px 2px); }

.sheetbar { height: 17px; flex: none; display: flex; background: #ccf; border-top: 1px solid #99c; font: 12px/18px "Liberation Mono", monospace; color: #039; }
.sheetbar .nav { border-right: 1px solid #99c; }
.first { background: #fff; padding-left: 9px; }
.gap { flex: 1; background: #9cc; border-top: 3px solid #99c; }
.split { width: 6px; background: #fff; border: 1px solid #699; }
.hbar { width: 295px; display: flex; align-items: center; background: #69c; }
.lt { border-left: 0; border-right-color: #336; margin: 0 7px; }
.rt { border-right: 0; border-left-color: #336; margin: 0 22px 0 auto; }
.hthumb { width: 182px; height: 14px; border: 1px solid #669; border-radius: 2px; background: linear-gradient(#fff 3px, #cff 3px 6px, #ccc 6px); display: grid; place-items: center; }
.hthumb i { width: 8px; height: 7px; background: repeating-linear-gradient(90deg, #888 0 1px, transparent 1px 2px); }

.status { height: 21px; flex: none; display: flex; align-items: stretch; background: #ccf; border-top: 2px solid #669; line-height: 18px; }
.ready { padding: 0 7px; border-right: 1px solid #9cc; width: 41px; }
.macro { width: 33px; border-right: 1px solid #9cc; display: grid; place-items: center; }
.stats { margin-left: auto; display: flex; gap: 17px; padding-right: 9px; }
.zoom { width: 266px; border-left: 1px solid #699; background: linear-gradient(#ccf 4px, #9cf 4px 11px, #69c 11px); display: flex; align-items: center; padding-left: 5px; }
.views { display: flex; height: 18px; border: 1px solid #9cf; border-radius: 2px; background: #ccf; }
.views button { width: 18px; }
.views .on { background: #fc9; border: 1px solid #c96; }
.percent { padding: 0 9px; }
.round { width: 16px; height: 16px; flex: none; border: 1px solid #669; border-radius: 8px; background: #eff; font: bold 15px/12px "Liberation Sans", sans-serif; color: #444; }
.zoom input { appearance: none; flex: 1; min-width: 0; height: 16px; margin: 0; background: linear-gradient(#cff, #cff) 0 8px / 100% 1px no-repeat; }
.zoom input::-webkit-slider-thumb { appearance: none; width: 9px; height: 13px; background: #cff; border: 1px solid #369; border-radius: 0 0 5px 5px; }
.grip { margin-left: 8px; align-self: flex-end; }

.counter { position: absolute; left: 895px; top: 570px; width: 46px; height: 46px; border: 3px solid #ddd; border-radius: 23px; background: linear-gradient(#9c9 30%, #6c6 30%); color: #fff; font: bold 12px/40px "Noto Sans", sans-serif; padding-left: 2px; }
.pointer { position: absolute; left: 286px; top: 386px; }

/* Taskbar */
.taskbar { height: 32px; flex: none; display: flex; background: #696; border-top: 1px solid #366; color: #fff; overflow: hidden; }
.start { width: 36px; justify-content: flex-start; border-right: 1px solid #243; background: linear-gradient(100deg, #9c9, #696 60%); }
.task { width: 60px; border: 1px solid #cec; border-width: 1px 2px 0 1px; margin: 0 1px 0 2px; background: linear-gradient(110deg, #cdc, #9c9); align-items: flex-end; }
.task.xl { background: linear-gradient(120deg, #aca 20%, #696 70%); border-right-color: #9c9; }
.tray { margin-left: auto; display: flex; align-items: center; gap: 8px; padding-left: 28px; border-radius: 12px 0 0 0; background: linear-gradient(#366 4px, #363 12px); }
.lang { font: 12px/16px "Liberation Mono", monospace; }
.tray time { display: flex; flex-direction: column; align-items: center; align-self: flex-start; padding: 2px 0 0 8px; line-height: 17px; white-space: nowrap; }
.show { width: 14px; align-self: stretch; border-left: 1px solid #9c9; background: #474; }
```
